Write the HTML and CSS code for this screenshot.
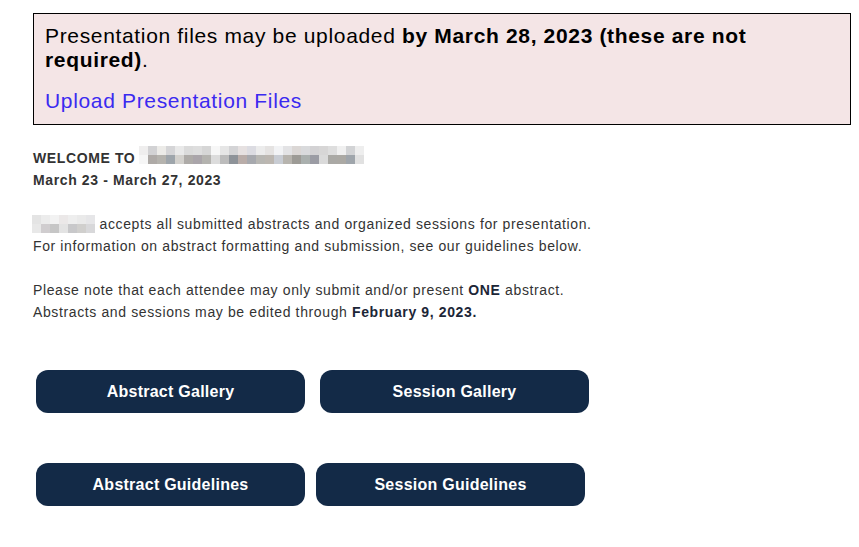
FILE: index.html
```html
<!DOCTYPE html>
<html lang="en">
<head>
<meta charset="utf-8">
<title>Abstracts</title>
<link rel="stylesheet" href="styles.css">
</head>
<body>
<div class="page">
  <div class="notice">
    <p class="notice-text">Presentation files may be uploaded <strong>by March 28, 2023 (these are not required)</strong>.</p>
    <p class="notice-link"><a href="#">Upload Presentation Files</a></p>
  </div>

  <div class="intro">
    <p class="welcome"><strong>WELCOME TO <span class="mosaic mosaic-title"></span><br>March 23 - March 27, 2023</strong></p>
    <p><span class="mosaic mosaic-name"></span> accepts all submitted abstracts and organized sessions for presentation.<br>For information on abstract formatting and submission, see our guidelines below.</p>
    <p>Please note that each attendee may only submit and/or present <strong>ONE</strong> abstract.<br>Abstracts and sessions may be edited through <strong>February 9, 2023.</strong></p>
  </div>

  <div class="buttons">
    <div class="btn-row row-gallery">
      <a class="btn" href="#">Abstract Gallery</a>
      <a class="btn" href="#">Session Gallery</a>
    </div>
    <div class="btn-row row-guides">
      <a class="btn" href="#">Abstract Guidelines</a>
      <a class="btn" href="#">Session Guidelines</a>
    </div>
  </div>
</div>
</body>
</html>
```

FILE: styles.css
```css
html, body {
  margin: 0;
  padding: 0;
  background: #ffffff;
}

body {
  font-family: "Liberation Sans", Arial, sans-serif;
  color: #333333;
}

.page {
  padding: 13px 8px 0 33px;
}

.notice {
  border: 1px solid #000000;
  background: #f4e5e6;
  padding: 10px 11px 11px 11px;
  font-size: 21px;
  line-height: 24px;
  letter-spacing: 0.66px;
  color: #000000;
}

.notice p {
  margin: 0;
}

.notice .notice-link {
  margin-top: 17px;
}

.notice-link a {
  color: #3b2af0;
  text-decoration: none;
}

.intro {
  margin-top: 21px;
  font-size: 14px;
  line-height: 22px;
  letter-spacing: 0.62px;
  color: #333333;
}

.intro p {
  margin: 0 0 22px 0;
}

.intro p:last-child {
  margin-bottom: 0;
}

.intro strong {
  color: #1c2637;
}

.welcome strong {
  color: #333333;
}

.mosaic {
  display: inline-block;
  letter-spacing: 0;
}

.mosaic-title {
  width: 225px;
  height: 18px;
  vertical-align: -1px;
  margin-left: -1px;
  background-image:
    linear-gradient(to right,
      #efeeee 0 9px, #d2d2d4 9px 18px, #ecebe8 18px 27px, #d5d5d7 27px 36px, #e9e9e9 36px 45px,
      #dbdbdb 45px 54px, #dedede 54px 63px, #d6d6d6 63px 72px, #f7f7f7 72px 81px, #e6e6e6 81px 90px,
      #d4d4d6 90px 99px, #e6e1e1 99px 108px, #dcdce2 108px 117px, #ececec 117px 126px, #e5e3e2 126px 135px,
      #f2f3f5 135px 144px, #e3e3e5 144px 153px, #dbd7d5 153px 162px, #d9dadc 162px 171px, #d3d2d4 171px 180px,
      #d7d6d6 180px 189px, #dedede 189px 198px, #f0f0f0 198px 207px, #d2d3d5 207px 216px, #eeeeee 216px 225px),
    linear-gradient(to right,
      #f6f6f6 0 9px, #aeaaa7 9px 18px, #b5b3ae 18px 27px, #9ea5ab 27px 36px, #d3d1cd 36px 45px,
      #aeaba8 45px 54px, #aaa5aa 54px 63px, #b4b3af 63px 72px, #dcdcdc 72px 81px, #bcbcbc 81px 90px,
      #8e9399 90px 99px, #b9ada9 99px 108px, #a7a9ae 108px 117px, #b8b7b3 117px 126px, #bcb7b1 126px 135px,
      #c8ccd3 135px 144px, #b7b4ae 144px 153px, #9d9b96 153px 162px, #aab0ae 162px 171px, #9b9ca4 171px 180px,
      #dadada 180px 189px, #aaa9a5 189px 198px, #aba9a4 198px 207px, #9fa5ab 207px 216px, #e1e1e1 216px 225px);
  background-size: 225px 9px, 225px 9px;
  background-position: 0 0, 0 9px;
  background-repeat: no-repeat;
}

.mosaic-name {
  width: 63px;
  height: 18px;
  vertical-align: -4px;
  margin-left: -1px;
  background-image:
    linear-gradient(to right,
      #e4e4e4 0 9px, #ececec 9px 18px, #f2f2f2 18px 27px, #ebe8e8 27px 36px,
      #eeeeee 36px 45px, #eaeaea 45px 54px, #e6e6e8 54px 63px),
    linear-gradient(to right,
      #e8e8e8 0 9px, #d0cdcf 9px 18px, #c6c6c6 18px 27px, #e3e3e3 27px 36px,
      #c8c8ca 36px 45px, #d0cfcd 45px 54px, #d8d8da 54px 63px);
  background-size: 63px 9px, 63px 9px;
  background-position: 0 0, 0 9px;
  background-repeat: no-repeat;
}

.buttons {
  margin-top: 47px;
  margin-left: 3px;
  display: flex;
  flex-direction: column;
  gap: 50px;
}

.btn-row {
  display: flex;
}

.row-gallery {
  gap: 15px;
}

.row-guides {
  gap: 11px;
}

.btn {
  display: flex;
  align-items: center;
  justify-content: center;
  width: 269px;
  height: 43px;
  border-radius: 12px;
  background: #132a47;
  color: #ffffff;
  font-size: 16px;
  font-weight: bold;
  letter-spacing: 0.25px;
  text-decoration: none;
}
```
